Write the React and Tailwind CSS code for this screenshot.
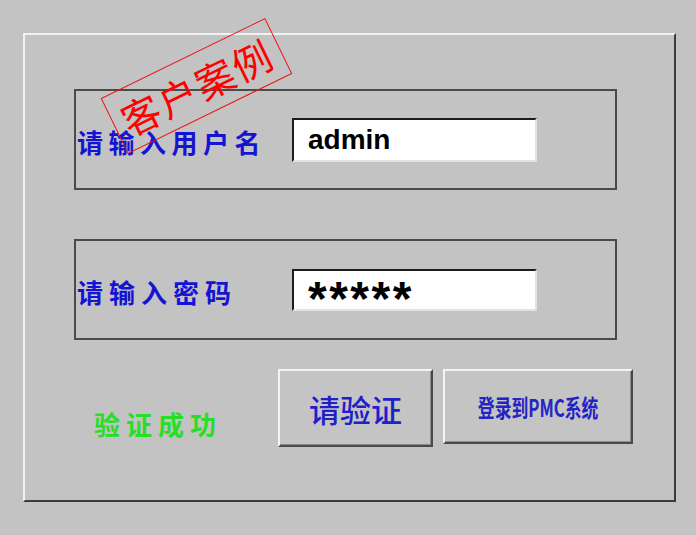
import React from "react";

const cjk = "font-['Noto_Sans_CJK_SC',sans-serif]";

const Field = ({ label, children, labelClass }) => (
  <div className="flex h-[101px] w-[543px] items-center border-2 border-[#4a4a4a] pl-[1px]">
    <div
      className={`w-[215px] shrink-0 whitespace-nowrap text-[26px] font-bold leading-none text-[#1414d2] ${cjk} ${labelClass}`}
    >
      {label}
    </div>
    {children}
  </div>
);

const RaisedButton = ({ className, children }) => (
  <button
    type="button"
    className={`flex items-center justify-center border-2 border-t-[#f4f4f4] border-l-[#f4f4f4] border-r-[#4a4a4a] border-b-[#4a4a4a] bg-[#c4c4c4] shadow-[inset_-1px_-1px_0_#8c8c8c] ${className}`}
  >
    {children}
  </button>
);

export default function App() {
  return (
    <div className="relative h-[535px] w-[696px] overflow-hidden bg-[#c3c3c3] pl-[23px] pt-[33px]">
      <div className="flex h-[469px] w-[653px] flex-col border-2 border-t-[#f2f2f2] border-l-[#f2f2f2] border-r-[#3c3c3c] border-b-[#3c3c3c] pl-[49px] pt-[54px]">
        <Field label="请输入用户名" labelClass="tracking-[5.5px] mt-[5px]">
          <div className="flex h-[44px] w-[245px] items-center border-2 border-t-[#1c1c1c] border-l-[#1c1c1c] border-r-[#e2e2e2] border-b-[#e2e2e2] bg-white pl-[14px]">
            <span className="font-['Liberation_Sans',Arial,sans-serif] text-[28px] font-bold leading-none text-black">
              admin
            </span>
          </div>
        </Field>

        <div className="mt-[49px]">
          <Field label="请输入密码" labelClass="tracking-[6px] mt-[5px]">
            <div className="flex h-[42px] w-[245px] items-start overflow-hidden border-2 border-t-[#1c1c1c] border-l-[#1c1c1c] border-r-[#e2e2e2] border-b-[#e2e2e2] bg-white pl-[14px]">
              <span className="font-['Liberation_Sans',Arial,sans-serif] text-[48px] font-bold leading-[56px] tracking-[2.5px] text-black">
                *****
              </span>
            </div>
          </Field>
        </div>

        <div className="mt-[29px] flex items-start">
          <div className="ml-[20px] w-[184px] pt-[42px]">
            <span
              className={`whitespace-nowrap text-[26px] font-bold leading-none tracking-[6px] text-[#26de26] ${cjk}`}
            >
              验证成功
            </span>
          </div>
          <RaisedButton className="h-[78px] w-[155px]">
            <span className={`text-[31px] font-medium leading-none text-[#2020c8] ${cjk}`}>
              请验证
            </span>
          </RaisedButton>
          <RaisedButton className="ml-[10px] h-[75px] w-[190px]">
            <span
              className={`inline-block scale-x-[0.7] whitespace-nowrap text-[24px] font-bold leading-none text-[#2424c4] ${cjk}`}
            >
              登录到PMC系统
            </span>
          </RaisedButton>
        </div>
      </div>

      {/* 客户案例 stamp */}
      <div className="pointer-events-none absolute left-[105px] top-[55px] flex h-[62px] w-[183px] -rotate-[26deg] items-center justify-center border border-[#f01010]">
        <span className={`text-[39px] leading-none tracking-[2px] text-[#ff0000] ${cjk}`}>
          客户案例
        </span>
      </div>
    </div>
  );
}
